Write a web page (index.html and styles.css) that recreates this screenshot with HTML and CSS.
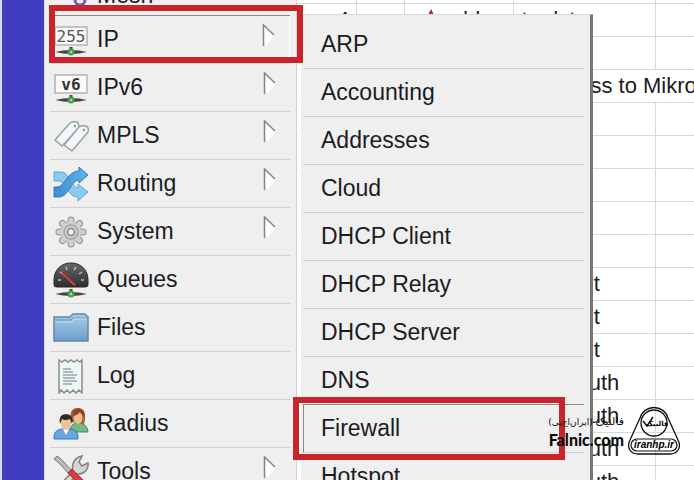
FILE: index.html
```
<!DOCTYPE html>
<html lang="en">
<head>
	<meta charset="UTF-8">
	<meta name="viewport" content="width=device-width, initial-scale=1.0">
	<title>RouterOS Menu - IP Firewall</title>
	<link rel="stylesheet" href="styles.css">
</head>
<body>

	<!-- shared shapes -->
	<svg class="defs" aria-hidden="true">
		<defs>
			<linearGradient id="blue" x1="0" y1="0" x2="0" y2="1"><stop offset="0" stop-color="#a9cdea"/><stop offset="1" stop-color="#6c9fcb"/></linearGradient>
			<linearGradient id="arrow" x1="0" y1="0" x2="1" y2="0"><stop offset="0" stop-color="#3f8fd0"/><stop offset="1" stop-color="#62b2ea"/></linearGradient>
			<linearGradient id="dark" x1="0" y1="0" x2="0" y2="1"><stop offset="0" stop-color="#6b6b6b"/><stop offset="1" stop-color="#2b2b2b"/></linearGradient>
			<symbol id="flag" viewBox="0 0 16 26">
				<path d="M3 3 L13 12 L3 22Z" fill="#fff"/>
				<path d="M13 12 L4 22" stroke="#fff" stroke-width="2"/>
				<path d="M2.500 23V2L13 12" fill="none" stroke="#858585" stroke-width="1.500"/>
			</symbol>
			<symbol id="net" viewBox="0 0 36 10">
				<path d="M2 5 Q18 1 34 5 Q18 9 2 5" fill="#434743"/>
				<path d="M18 0v3" stroke="#444" stroke-width="3"/>
				<circle cx="18" cy="5" r="3.500" fill="#46a04b"/><circle cx="18" cy="5" r="1.200" fill="#a6e5a5"/>
			</symbol>
		</defs>
	</svg>

	<div class="workspace">
		<div class="side-strip"></div>

		<!-- MAIN MENU -->
		<nav class="main-menu">
			<ul>
				<li><button class="item">
					<svg class="icon" viewBox="0 0 36 36"><circle cx="27" cy="22" r="5" fill="none" stroke="#7a55c4" stroke-width="3"/><circle cx="10" cy="10" r="4" fill="none" stroke="#7a55c4" stroke-width="3"/></svg>
					<span>Mesh</span></button></li>
				<li class="open"><button class="item">
					<svg class="icon" viewBox="0 0 36 36"><rect x="2" y="5" width="32" height="18" fill="#fafafa" stroke="#b4b4b4" stroke-width="1.500"/><text x="18" y="20" class="mono" fill="#555">255</text><use href="#net" y="25" width="36" height="10"/></svg>
					<span>IP</span><svg class="flag"><use href="#flag"/></svg></button></li>
				<li><button class="item">
					<svg class="icon" viewBox="0 0 36 36"><rect x="2" y="5" width="32" height="18" fill="#fafafa" stroke="#b4b4b4" stroke-width="1.500"/><text x="18" y="20" class="mono bold" fill="#333">v6</text><use href="#net" y="25" width="36" height="10"/></svg>
					<span>IPv6</span><svg class="flag"><use href="#flag"/></svg></button></li>
				<li><button class="item">
					<svg class="icon" viewBox="0 0 36 36"><g fill="#f5f8f8" stroke="#94a3a6" stroke-width="1.500" stroke-linejoin="round"><path d="M2 22 17 5Q20 3 24 4Q26 5 26 10L9 28Z"/><path d="M11 27 26 9Q29 7 33 8Q36 9 35 14L19 33Z"/></g><circle cx="22" cy="8" r="1.300" fill="#899"/><circle cx="31" cy="12" r="1.300" fill="#899"/></svg>
					<span>MPLS</span><svg class="flag"><use href="#flag"/></svg></button></li>
				<li><button class="item">
					<svg class="icon" viewBox="0 0 36 36"><path d="M1 6H8C17 6 18 22 25 22V18L35 26 25 35V31C14 31 13 15 6 15H1Z" fill="#8ccaf0" stroke="#62a6d6"/><path d="M1 21H4C12 21 14 5 26 5V1L35 9 26 17V14C18 14 16 31 6 31H1Z" fill="url(#arrow)" stroke="#347eb9"/></svg>
					<span>Routing</span><svg class="flag"><use href="#flag"/></svg></button></li>
				<li><button class="item">
					<svg class="icon" viewBox="0 0 36 36"><g stroke="#929292" stroke-width="7" stroke-linecap="round"><path d="M18 6V30M6 18H30M9.500 9.500 26.500 26.500M26.500 9.500 9.500 26.500"/></g><g stroke="#cfcfcf" stroke-width="5" stroke-linecap="round"><path d="M18 6V30M6 18H30M9.500 9.500 26.500 26.500M26.500 9.500 9.500 26.500"/></g><circle cx="18" cy="18" r="10" fill="#cfcfcf"/><circle cx="18" cy="18" r="7" fill="none" stroke="#a4a4a4" stroke-width="1.500"/><circle cx="18" cy="18" r="3.500" fill="#eee" stroke="#858585" stroke-width="1.500"/></svg>
					<span>System</span><svg class="flag"><use href="#flag"/></svg></button></li>
				<li><button class="item">
					<svg class="icon" viewBox="0 0 36 36"><path d="M1 23V18C1 8 8 1 18 1S35 8 35 18V23Q35 25 32 25H4Q1 25 1 23Z" fill="url(#dark)" stroke="#292929"/><path d="M5 18H8M7 10 10 12M13 5 14 8M21 8 23 5M26 12 29 10M28 18H31" stroke="#bbb" stroke-width="1.500"/><path d="M9 10 22 23" stroke="#d44848" stroke-width="2.500"/><path d="M10 10 22 22" stroke="#321" stroke-width=".7"/><use href="#net" y="27" width="36" height="10"/></svg>
					<span>Queues</span></button></li>
				<li><button class="item">
					<svg class="icon" viewBox="0 0 36 36"><path d="M1 7H17L20 4H32L35 7V31H1Z" fill="url(#blue)" stroke="#6288a8" stroke-width="1.500"/><path d="M18 10 20 8H34M18 10H2" fill="none" stroke="#6c93b5"/><path d="M2 12H19L21 9H34" fill="none" stroke="#c4def1"/></svg>
					<span>Files</span></button></li>
				<li><button class="item">
					<svg class="icon" viewBox="0 0 36 36"><path d="M6 2 9 4 12 2 15 4 18 2 21 4 24 2 27 4 29 2V35L26 32 23 35 20 32 17 35 14 32 11 35 8 32 6 35Z" fill="#eef6f5" stroke="#87918f" stroke-width="1.500"/><path d="M10 11H18M10 14H20M10 17H24M10 20H22M10 23H24M10 26H19" stroke="#92a6ab" stroke-width="1.500"/></svg>
					<span>Log</span></button></li>
				<li><button class="item">
					<svg class="icon" viewBox="0 0 36 36"><path d="M17 26Q17 17 25 17Q35 18 35 26Z" fill="#72b985" stroke="#3e8c57"/><path d="M18 16C16 6 19 2 25 2S34 7 31 18Z" fill="#a65a32"/><ellipse cx="25" cy="12" rx="4.500" ry="6" fill="#efbd91"/><path d="M20 10Q26 9 27 5L31 11V5Q25 0 20 5Z" fill="#8d4523"/><path d="M1 33Q0 24 9 23H17Q26 24 25 33Z" fill="#67a7e2" stroke="#3d78b7"/><path d="M10 23 13 29 16 23Z" fill="#fff"/><ellipse cx="13" cy="17" rx="5" ry="7" fill="#f0c096"/><path d="M7 18Q5 8 13 8T19 18L17 13Q12 15 9 13Z" fill="#302a29"/></svg>
					<span>Radius</span></button></li>
				<li><button class="item">
					<svg class="icon" viewBox="0 0 36 36"><path d="M1 5 4 2 8 5 22 20 19 23 5 8Z" fill="#bbb" stroke="#777"/><path d="M4 34 20 17C18 10 22 3 29 2L26 8 29 12 35 9C36 16 31 20 25 20L9 36Z" fill="#d5d5d5" stroke="#818181" stroke-width="1.500"/><path d="M15 19 19 15 35 31V36H31Z" fill="#d33f43" stroke="#9e292d"/></svg>
					<span>Tools</span><svg class="flag"><use href="#flag"/></svg></button></li>
			</ul>
		</nav>

		<!-- FIREWALL RULES -->
		<main class="rules">
			<table>
				<colgroup><col class="col-num"><col class="col-mark"><col class="col-action"><col class="col-chain"><col></colgroup>
				<tr><td></td><td></td><td></td><td></td><td></td></tr>
				<tr><td class="num">4</td><td></td><td class="action"><svg class="mark" viewBox="0 0 12 12"><path d="M6 0 12 12H0Z" fill="#b32432"/></svg>add src</td><td>to dst</td><td></td></tr>
				<tr><td></td><td></td><td></td><td></td><td></td></tr>
				<tr><td></td><td></td><td class="comment" colspan="3">Access to Mikrotik</td></tr>
				<tr><td></td><td></td><td></td><td></td><td></td></tr>
				<tr><td></td><td></td><td></td><td></td><td></td></tr>
				<tr><td></td><td></td><td></td><td></td><td></td></tr>
				<tr><td></td><td></td><td></td><td></td><td></td></tr>
				<tr><td></td><td></td><td></td><td></td><td></td></tr>
				<tr><td></td><td></td><td></td><td>hs-input</td><td></td></tr>
				<tr><td></td><td></td><td></td><td>hs-input</td><td></td></tr>
				<tr><td></td><td></td><td></td><td>hs-input</td><td></td></tr>
				<tr><td></td><td></td><td></td><td>hs-unauth</td><td></td></tr>
				<tr><td></td><td></td><td></td><td>hs-unauth</td><td></td></tr>
				<tr><td></td><td></td><td></td><td>hs-unauth</td><td></td></tr>
				<tr><td></td><td></td><td></td><td>hs-unauth</td><td></td></tr>
			</table>
		</main>
	</div>

	<!-- IP SUBMENU -->
	<nav class="sub-menu">
		<ul>
			<li><button class="item">ARP</button></li>
			<li><button class="item">Accounting</button></li>
			<li><button class="item">Addresses</button></li>
			<li><button class="item">Cloud</button></li>
			<li><button class="item">DHCP Client</button></li>
			<li><button class="item">DHCP Relay</button></li>
			<li><button class="item">DHCP Server</button></li>
			<li class="before-active"><button class="item">DNS</button></li>
			<li class="active"><button class="item">Firewall</button></li>
			<li><button class="item">Hotspot</button></li>
		</ul>
	</nav>

	<!-- HIGHLIGHTS -->
	<div class="highlight highlight-ip"></div>
	<div class="highlight highlight-firewall"></div>

	<!-- WATERMARK -->
	<div class="watermark">
		<div class="brand">
			<span class="brand-fa" lang="fa" dir="rtl"><span class="brand-name">فالنیک</span> (ایران‌اچ‌پی)</span>
			<span class="brand-en">Falnic.com</span>
		</div>
		<svg class="badge" viewBox="0 0 52 50">
			<path d="M12 12C16 -2 36 -2 40 12L50 34C54 42 49 48 42 48H10C3 48-2 42 2 34Z" fill="none" stroke="#111" stroke-width="1.300"/>
			<circle cx="26" cy="17" r="13" fill="none" stroke="#111" stroke-width="1.300"/>
			<path d="M15 15 19 20 25 11" fill="none" stroke="#111" stroke-width="1.500"/>
			<text x="29" y="20" class="badge-fa">فالنیک</text>
			<rect x="3" y="33" width="46" height="12" rx="6" fill="none" stroke="#111" stroke-width="1.200"/>
			<text x="26" y="42" class="badge-en">iranhp.ir</text>
		</svg>
	</div>

</body>
</html>
```
FILE: styles.css
```
* {
	margin: 0;
	padding: 0;
	box-sizing: border-box;
}

body {
	height: 100vh;
	overflow: hidden;
	position: relative;
	background: #fff;
	color: #1c1c24;
	font-family: "Liberation Sans", Arial, sans-serif;
	font-size: 23px;
}

ul {
	list-style: none;
}

.defs {
	position: absolute;
	width: 0;
	height: 0;
}

.workspace {
	display: flex;
	height: 100%;
	overflow: hidden;
}

.side-strip {
	flex: 0 0 45px;
	background: #403dc0;
	border-left: 2px solid #dcdcf4;
	border-right: 1px solid #dcdcf4;
}

/* MAIN MENU */
.main-menu {
	flex: 0 0 252px;
	padding: 0 6px 0 5px;
	background: #efefef;
	border-right: 1px solid #d2d2d2;
}

/* the list is scrolled, so its first row is cut at the top */
.main-menu ul {
	margin-top: -32px;
}

.main-menu li,
.sub-menu li {
	height: 48px;
	border-bottom: 1px solid #d0d0d0;
}

.item {
	display: flex;
	align-items: center;
	width: 100%;
	height: 100%;
	border: none;
	background: none;
	color: inherit;
	font: inherit;
	text-align: left;
}

.main-menu .item {
	gap: 8px;
	padding: 0 12px 0 3px;
}

.main-menu li:first-child {
	border-bottom-color: #8a8a8a;
}

.main-menu li:first-child .item {
	padding-top: 8px;
}

.main-menu .open {
	border-right: 1px solid #fff;
}

.icon {
	flex: 0 0 36px;
	width: 36px;
	height: 36px;
}

.mono {
	font-family: "DejaVu Sans Mono", monospace;
	font-size: 16px;
	text-anchor: middle;
}

.bold {
	font-weight: bold;
}

.flag {
	width: 16px;
	height: 26px;
	margin-left: auto;
	margin-bottom: 8px;
}

/* FIREWALL RULES */
.rules {
	flex: 1;
	min-width: 0;
	overflow: hidden;
}

.rules table {
	width: 100%;
	margin-top: -30px;
	table-layout: fixed;
	border-collapse: collapse;
	font-size: 22px;
}

.rules td {
	height: 33px;
	padding-left: 8px;
	border-right: 1px solid #d9d9d9;
	border-bottom: 1px solid #d9d9d9;
	line-height: 32px;
	white-space: nowrap;
}

.rules td:last-child {
	border-right: none;
}

.col-num {
	width: 59px;
}

.col-mark {
	width: 48px;
}

.col-action {
	width: 109px;
}

.col-chain {
	width: 142px;
}

.rules .num {
	padding-left: 40px;
}

.rules .action {
	padding-left: 20px;
}

.mark {
	width: 12px;
	height: 12px;
	margin-right: 7px;
	vertical-align: 6px;
}

.rules .comment {
	padding-left: 137px;
}

/* IP SUBMENU */
.sub-menu {
	position: absolute;
	top: 14px;
	bottom: 0;
	left: 298px;
	width: 295px;
	overflow: hidden;
	padding: 6px 6px 0 2px;
	background: #efefef;
	border-top: 1px solid #d8d8d8;
	border-left: 3px solid #fcfcfc;
	border-right: 3px solid #777;
}

.sub-menu .item {
	padding-left: 18px;
}

.sub-menu .before-active {
	border-bottom-color: #8a8a8a;
}

.sub-menu .active {
	border-left: 1px solid #8a8a8a;
}

.sub-menu .active .item {
	padding-left: 17px;
}

/* HIGHLIGHTS */
.highlight {
	position: absolute;
	border: 6px solid #c8242c;
}

.highlight-ip {
	top: 5px;
	left: 49px;
	width: 254px;
	height: 58px;
}

.highlight-firewall {
	top: 397px;
	left: 293px;
	width: 272px;
	height: 63px;
}

/* WATERMARK */
.watermark {
	position: absolute;
	right: 14px;
	bottom: 24px;
	display: flex;
	align-items: center;
	gap: 4px;
	color: #0c0c0c;
}

.brand {
	display: flex;
	flex-direction: column;
	align-items: flex-end;
	white-space: nowrap;
}

.brand-fa {
	font-family: "DejaVu Sans", sans-serif;
	font-size: 9px;
	line-height: 18px;
}

.brand-name {
	font-size: 11px;
}

.brand-en {
	font-family: Lato, sans-serif;
	font-size: 16px;
	font-weight: 900;
	line-height: 18px;
}

.badge {
	width: 52px;
	height: 50px;
}

.badge-fa {
	font-family: "DejaVu Sans", sans-serif;
	font-size: 7px;
	font-weight: bold;
	text-anchor: middle;
}

.badge-en {
	font-family: "Liberation Sans", sans-serif;
	font-size: 10px;
	font-style: italic;
	font-weight: bold;
	text-anchor: middle;
}
```
